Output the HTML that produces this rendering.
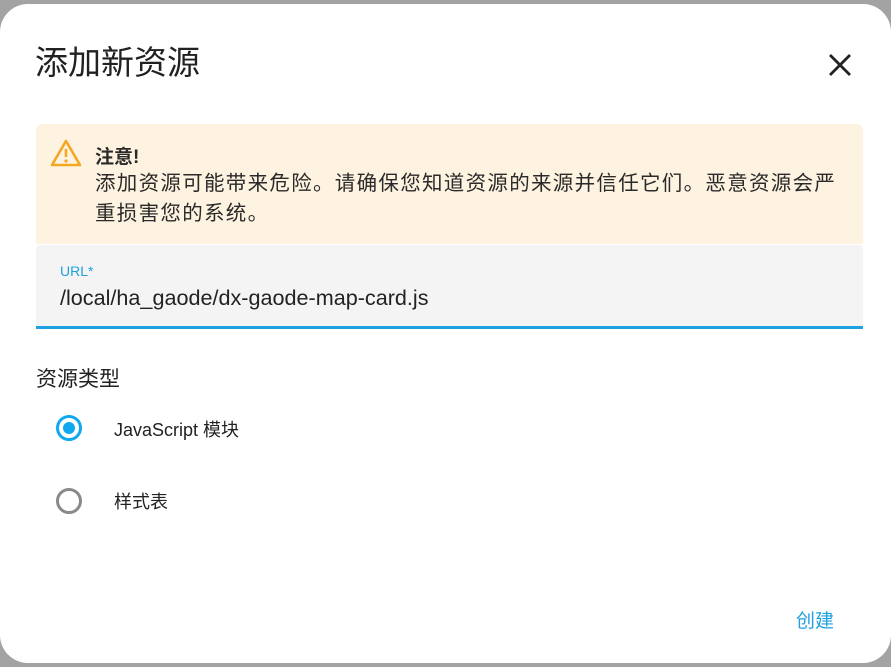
<!DOCTYPE html>
<html><head><meta charset="utf-8"><style>
body{margin:0;width:891px;height:667px;background:#a3a3a3;overflow:hidden;font-family:"Liberation Sans","Noto Sans CJK SC",sans-serif;}
.d{position:absolute;left:0;top:4px;width:891px;height:659px;background:#fff;border-radius:28px;}
.t{position:absolute;left:35px;top:37px;font-size:33px;color:#212121;line-height:44px;}
.x{position:absolute;left:826px;top:47px;}
.w{position:absolute;left:36px;top:120px;width:827px;height:120px;background:#fef3e0;border-radius:6px 6px 0 0;}
.w b{position:absolute;left:59px;top:18px;font-size:19px;color:#2a2a2a;}
.w p{position:absolute;left:59px;top:45px;margin:0;width:780px;white-space:nowrap;font-size:20.5px;letter-spacing:1.3px;line-height:30px;color:#2a2a2a;}
.u{position:absolute;left:36px;top:241px;width:827px;height:81px;background:#f4f4f4;border-bottom:3px solid #1fa0e0;border-radius:4px 4px 0 0;}
.u .l{position:absolute;left:24px;top:18px;font-size:14px;color:#1fa0e0;}
.u .v{position:absolute;left:24px;top:40px;font-size:21.6px;color:#222;}
.s{position:absolute;left:36px;top:359px;font-size:21px;color:#222;}
.r{position:absolute;left:56px;width:26px;height:26px;box-sizing:border-box;border-radius:50%;}
.lab{position:absolute;left:114px;font-size:18px;color:#222;}
.c{position:absolute;left:796px;top:602px;font-size:19px;color:#1fa0e0;}
</style></head><body><div class="d">
<div class="t">添加新资源</div>
<svg class="x" width="28" height="28" viewBox="0 0 28 28"><path d="M4 4L24 24M24 4L4 24" stroke="#222" stroke-width="2.8"/></svg>
<div class="w"><svg style="position:absolute;left:14px;top:14px" width="32" height="30" viewBox="0 0 32 30"><path d="M16 3L30 27H2Z" fill="none" stroke="#f5a623" stroke-width="2.6" stroke-linejoin="round"/><path d="M16 11V19" stroke="#f5a623" stroke-width="2.6"/><circle cx="16" cy="23" r="1.6" fill="#f5a623"/></svg>
<b>注意!</b><p>添加资源可能带来危险。请确保您知道资源的来源并信任它们。恶意资源会严<br>重损害您的系统。</p></div>
<div class="u"><div class="l">URL*</div><div class="v">/local/ha_gaode/dx-gaode-map-card.js</div></div>
<div class="s">资源类型</div>
<div class="r" style="top:411px;border:3px solid #12a8ef"><div style="position:absolute;left:4px;top:4px;width:12px;height:12px;border-radius:50%;background:#12a8ef"></div></div>
<div class="lab" style="top:412px">JavaScript 模块</div>
<div class="r" style="top:484px;border:3px solid #8a8a8a"></div>
<div class="lab" style="top:484px">样式表</div>
<div class="c">创建</div>
</div></body></html>
